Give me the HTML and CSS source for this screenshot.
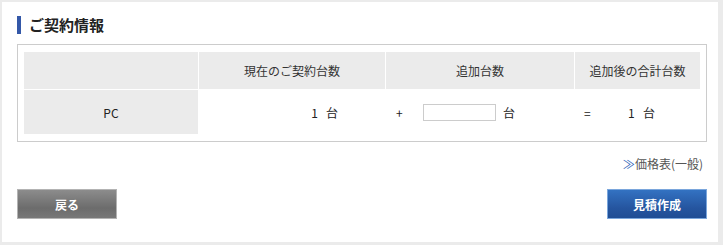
FILE: index.html
```html
<!DOCTYPE html>
<html lang="ja">
<head>
<meta charset="utf-8">
<title>ご契約情報</title>
<link rel="stylesheet" href="styles.css">
</head>
<body>
<div class="panel">
  <h2 class="title">ご契約情報</h2>
  <div class="box">
    <div class="grid">
      <div class="th"></div>
      <div class="th">現在のご契約台数</div>
      <div class="th">追加台数</div>
      <div class="th">追加後の合計台数</div>
      <div class="td label">PC</div>
      <div class="td current"><span>1</span><span>台</span></div>
      <div class="td add"><span class="plus">+</span><input class="qty" type="text"><span class="unit">台</span></div>
      <div class="td total"><span class="eq">=</span><span class="num">1</span><span class="unit2">台</span></div>
    </div>
  </div>
  <div class="linkrow"><a class="pricelink" href="#"><span class="arrow">≫</span>価格表(一般)</a></div>
  <div class="buttons">
    <button class="btn back">戻る</button>
    <button class="btn estimate">見積作成</button>
  </div>
</div>
</body>
</html>
```

FILE: styles.css
```css
html, body {
  margin: 0;
  padding: 0;
  background: #ebebeb;
  font-family: "Noto Sans CJK JP", "Noto Sans", sans-serif;
  color: #333;
}

.panel {
  margin: 2px;
  width: 716px;
  height: 240px;
  box-sizing: border-box;
  background: #fff;
  padding: 14px 11px 0 15px;
}

.title {
  margin: 0;
  height: 18px;
  display: flex;
  align-items: center;
  border-left: 4px solid #3458a8;
  padding-left: 8px;
  font-size: 15px;
  font-weight: bold;
  color: #222;
  line-height: 18px;
}

.box {
  margin-top: 10px;
  border: 1px solid #cccccc;
  padding: 7px 6px 7px 6px;
}

.grid {
  display: grid;
  grid-template-columns: 174px 186px 188px 125px;
  grid-template-rows: 37px 44px;
  column-gap: 1px;
  row-gap: 1px;
  font-size: 12px;
}

.th {
  background: #ebebeb;
  display: flex;
  align-items: center;
  justify-content: center;
  color: #333;
}

.td {
  display: flex;
  align-items: center;
  background: #fff;
  color: #222;
}

.td.label {
  background: #ebebeb;
  justify-content: center;
}

.td.current {
  justify-content: flex-end;
  padding-right: 47px;
  gap: 8px;
}

.td.add {
  padding-left: 10px;
}

.plus {
  width: 27px;
}

.qty {
  width: 73px;
  height: 17px;
  box-sizing: border-box;
  border: 1px solid #cccccc;
  padding: 0;
  margin: 0 7px 0 0;
  font-size: 12px;
}

.td.total {
  padding-left: 9px;
}

.eq {
  width: 44px;
}

.num {
  width: 15px;
}

.linkrow {
  margin-top: 14px;
  display: flex;
  justify-content: flex-end;
  padding-right: 4px;
  line-height: 16px;
}

.pricelink {
  font-size: 12px;
  color: #555;
  text-decoration: none;
}

.arrow {
  color: #2a62b8;
}

.buttons {
  margin-top: 17px;
  width: 690px;
  display: flex;
  justify-content: space-between;
}

.btn {
  width: 100px;
  height: 30px;
  box-sizing: border-box;
  font-family: "Noto Sans CJK JP", sans-serif;
  font-size: 12px;
  font-weight: bold;
  color: #fff;
  padding: 0;
  cursor: pointer;
}

.btn.back {
  border: 1px solid #b3b3b3;
  background: linear-gradient(#8c8c8c, #6c6c6c 65%, #787878);
}

.btn.estimate {
  border: 1px solid #7aa6dc;
  background: linear-gradient(#3372c2, #25559f 65%, #1f4d94);
}
```
